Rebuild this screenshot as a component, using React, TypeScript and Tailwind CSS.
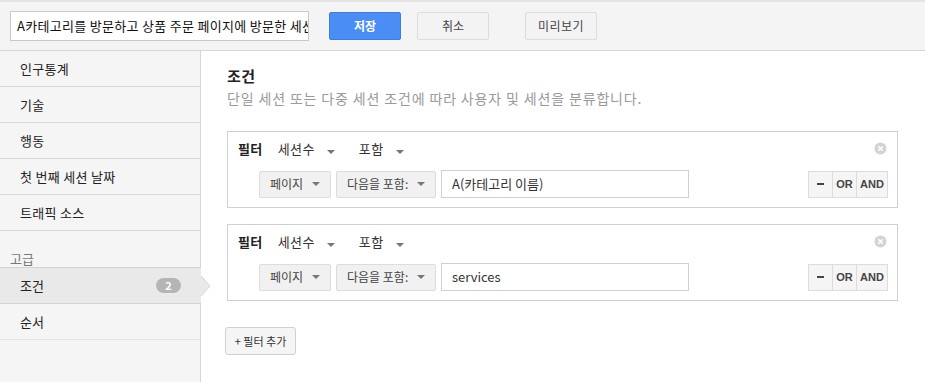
import React from "react";

const font = { fontFamily: '"Noto Sans CJK KR", "Noto Sans", Arial, sans-serif' };

function Caret() {
  return <span className="inline-block w-0 h-0 border-l-[4px] border-r-[4px] border-t-[4px] border-l-transparent border-r-transparent border-t-[#777]" />;
}

function FilterBox({ value }: { value: string }) {
  return (
    <div className="relative border border-[#d0d0d0] bg-white h-[77px] w-[671px]">
      <div className="flex items-center h-[30px] pt-[3px] pl-[10px] text-[13px] text-[#222] tracking-[0.4px]">
        <span className="font-bold">필터</span>
        <span className="ml-[15px] text-[#333]">세션수</span>
        <span className="ml-[12px] mt-[1px]"><Caret /></span>
        <span className="ml-[24px] text-[#333]">포함</span>
        <span className="ml-[12px] mt-[1px]"><Caret /></span>
      </div>
      <svg className="absolute right-[10px] top-[10px]" width="13" height="13" viewBox="0 0 13 13">
        <circle cx="6.5" cy="6.5" r="6" fill="#d3d3d3" />
        <path d="M4.3 4.3 L8.7 8.7 M8.7 4.3 L4.3 8.7" stroke="#fff" strokeWidth="1.6" />
      </svg>
      <div className="flex items-center mt-[8px] pl-[31px] pr-[9px]">
        <div className="flex items-center justify-between h-[27px] w-[72px] bg-[#f1f1f1] border border-[#dcdcdc] rounded-[2px] px-[10px] text-[12px] text-[#444]">
          <span>페이지</span>
          <Caret />
        </div>
        <div className="flex items-center justify-between ml-[5px] h-[27px] w-[100px] bg-[#f1f1f1] border border-[#dcdcdc] rounded-[2px] pl-[10px] pr-[10px] text-[12px] text-[#444]">
          <span>다음을 포함:</span>
          <Caret />
        </div>
        <div className="ml-[5px] flex items-center h-[28px] w-[248px] border border-[#d0d0d0] bg-white px-[10px] text-[13px] text-[#333]">
          {value}
        </div>
        <div className="ml-auto flex h-[27px] border border-[#dcdcdc] bg-[#f5f5f5] text-[11px] font-bold text-[#444]">
          <div className="w-[24px] flex items-center justify-center border-r border-[#dcdcdc]">
            <span className="block w-[7px] h-[2px] bg-[#444]" />
          </div>
          <div className="w-[24px] flex items-center justify-center border-r border-[#dcdcdc]" style={{ fontFamily: '"Liberation Sans", Arial, sans-serif' }}>OR</div>
          <div className="w-[30px] flex items-center justify-center" style={{ fontFamily: '"Liberation Sans", Arial, sans-serif' }}>AND</div>
        </div>
      </div>
    </div>
  );
}

export default function App() {
  const items = ["인구통계", "기술", "행동", "첫 번째 세션 날짜", "트래픽 소스"];
  return (
    <div className="w-[925px] h-[382px] overflow-hidden bg-white flex flex-col" style={font}>
      <div className="h-[51px] shrink-0 flex items-center bg-[#f4f4f4] border-b border-[#d6d6d6] border-t-2 border-t-[#e4e4e4]">
        <div className="ml-[10px] w-[299px] h-[30px] border border-[#c8c8c8] bg-white flex items-center pl-[6px] overflow-hidden whitespace-nowrap text-[13px] text-[#111] tracking-[0.3px]">
          A카테고리를 방문하고 상품 주문 페이지에 방문한 세션
        </div>
        <button className="ml-[20px] w-[72px] h-[28px] bg-[#4a8ef5] border border-[#3b7de0] rounded-[2px] text-white text-[12px] font-bold">저장</button>
        <button className="ml-[16px] w-[72px] h-[28px] bg-[#f3f3f3] border border-[#dcdcdc] rounded-[2px] text-[#444] text-[12px]">취소</button>
        <button className="ml-[36px] w-[72px] h-[28px] bg-[#f3f3f3] border border-[#dcdcdc] rounded-[2px] text-[#444] text-[12px] tracking-[0.5px]">미리보기</button>
      </div>
      <div className="flex flex-1">
        <div className="w-[201px] shrink-0 bg-[#f5f5f5] border-r border-[#d6d6d6] flex flex-col">
          {items.map((t) => (
            <div key={t} className="h-[36px] flex items-center pl-[20px] border-b border-[#d9d9d9] text-[13px] text-[#222] tracking-[0.3px]">{t}</div>
          ))}
          <div className="mt-[19px] h-[17px] pl-[10px] text-[13px] text-[#777] leading-[17px]">고급</div>
          <div className="relative h-[37px] flex items-center pl-[20px] pr-[20px] bg-[#e9e9e9] border-y border-[#d3d3d3] text-[13px] text-[#222] mr-[-1px]">
            <span>조건</span>
            <span className="ml-auto w-[25px] h-[15px] rounded-full bg-[#b5b5b5] text-white text-[11px] font-bold flex items-center justify-center">2</span>
            <svg className="absolute right-[-10px] top-[8px]" width="10" height="20" viewBox="0 0 10 20">
              <path d="M0 0 L9 10 L0 20 Z" fill="#e9e9e9" />
              <path d="M0 0 L9 10 L0 20" fill="none" stroke="#d3d3d3" strokeWidth="1" />
            </svg>
          </div>
          <div className="h-[36px] flex items-center pl-[20px] border-b border-[#e4e4e4] text-[13px] text-[#222]">순서</div>
        </div>
        <div className="flex-1 pl-[26px] pt-[15px]">
          <div className="text-[15px] font-bold text-[#222] leading-[20px] tracking-[0.5px]">조건</div>
          <div className="text-[14px] text-[#9a9a9a] leading-[20px] mt-[2px] tracking-[0.85px]">단일 세션 또는 다중 세션 조건에 따라 사용자 및 세션을 분류합니다.</div>
          <div className="mt-[23px]">
            <FilterBox value="A(카테고리 이름)" />
          </div>
          <div className="mt-[16px]">
            <FilterBox value="services" />
          </div>
          <button className="mt-[26px] ml-[-2px] h-[28px] w-[71px] bg-[#f5f5f5] border border-[#d0d0d0] rounded-[3px] text-[11px] text-[#333]">+ 필터 추가</button>
        </div>
      </div>
    </div>
  );
}
